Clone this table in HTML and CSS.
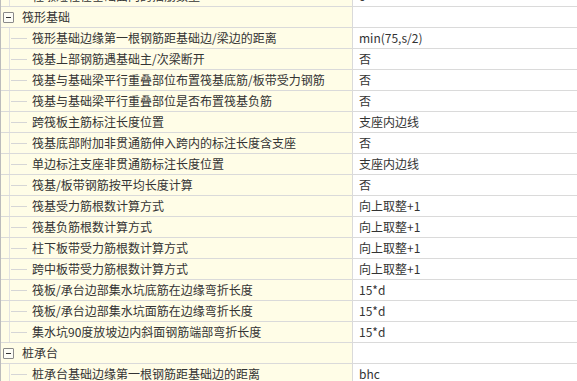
FILE: index.html
```html
<!DOCTYPE html>
<html lang="zh-CN">
<head>
<meta charset="utf-8">
<title>属性设置</title>
<link rel="stylesheet" href="styles.css">
</head>
<body>
<div class="grid">
  <div class="row item"><div class="name"><span class="indent"></span><span class="conn"></span><span class="label">柱墩短柱在基础面内的插筋数量</span></div><div class="value">0</div></div>
  <div class="row cat"><div class="name"><span class="toggle"></span><span class="label">筏形基础</span></div><div class="value"></div></div>
  <div class="row item"><div class="name"><span class="indent"></span><span class="conn"></span><span class="label">筏形基础边缘第一根钢筋距基础边/梁边的距离</span></div><div class="value">min(75,s/2)</div></div>
  <div class="row item"><div class="name"><span class="indent"></span><span class="conn"></span><span class="label">筏基上部钢筋遇基础主/次梁断开</span></div><div class="value">否</div></div>
  <div class="row item"><div class="name"><span class="indent"></span><span class="conn"></span><span class="label">筏基与基础梁平行重叠部位布置筏基底筋/板带受力钢筋</span></div><div class="value">否</div></div>
  <div class="row item"><div class="name"><span class="indent"></span><span class="conn"></span><span class="label">筏基与基础梁平行重叠部位是否布置筏基负筋</span></div><div class="value">否</div></div>
  <div class="row item"><div class="name"><span class="indent"></span><span class="conn"></span><span class="label">跨筏板主筋标注长度位置</span></div><div class="value">支座内边线</div></div>
  <div class="row item"><div class="name"><span class="indent"></span><span class="conn"></span><span class="label">筏基底部附加非贯通筋伸入跨内的标注长度含支座</span></div><div class="value">否</div></div>
  <div class="row item"><div class="name"><span class="indent"></span><span class="conn"></span><span class="label">单边标注支座非贯通筋标注长度位置</span></div><div class="value">支座内边线</div></div>
  <div class="row item"><div class="name"><span class="indent"></span><span class="conn"></span><span class="label">筏基/板带钢筋按平均长度计算</span></div><div class="value">否</div></div>
  <div class="row item"><div class="name"><span class="indent"></span><span class="conn"></span><span class="label">筏基受力筋根数计算方式</span></div><div class="value">向上取整+1</div></div>
  <div class="row item"><div class="name"><span class="indent"></span><span class="conn"></span><span class="label">筏基负筋根数计算方式</span></div><div class="value">向上取整+1</div></div>
  <div class="row item"><div class="name"><span class="indent"></span><span class="conn"></span><span class="label">柱下板带受力筋根数计算方式</span></div><div class="value">向上取整+1</div></div>
  <div class="row item"><div class="name"><span class="indent"></span><span class="conn"></span><span class="label">跨中板带受力筋根数计算方式</span></div><div class="value">向上取整+1</div></div>
  <div class="row item"><div class="name"><span class="indent"></span><span class="conn"></span><span class="label">筏板/承台边部集水坑底筋在边缘弯折长度</span></div><div class="value">15*d</div></div>
  <div class="row item"><div class="name"><span class="indent"></span><span class="conn"></span><span class="label">筏板/承台边部集水坑面筋在边缘弯折长度</span></div><div class="value">15*d</div></div>
  <div class="row item"><div class="name"><span class="indent"></span><span class="conn"></span><span class="label">集水坑90度放坡边内斜面钢筋端部弯折长度</span></div><div class="value">15*d</div></div>
  <div class="row cat"><div class="name"><span class="toggle"></span><span class="label">桩承台</span></div><div class="value"></div></div>
  <div class="row item"><div class="name"><span class="indent"></span><span class="conn"></span><span class="label">桩承台基础边缘第一根钢筋距基础边的距离</span></div><div class="value">bhc</div></div>
</div>
</body>
</html>
```

FILE: styles.css
```css
html, body {
  margin: 0;
  padding: 0;
  background: #ffffff;
  overflow: hidden;
}

body {
  font-family: "Noto Sans CJK SC", "Noto Sans", sans-serif;
  font-size: 12px;
  color: #333333;
}

.grid {
  margin-top: -14px;
  border-left: 1px solid #bcbcbc;
}

.row {
  display: flex;
  height: 21px;
  box-sizing: border-box;
  border-bottom: 1px solid #dadada;
}

.name {
  width: 352px;
  flex: none;
  box-sizing: border-box;
  border-right: 1px solid #dadada;
  background: #fffde7;
  display: flex;
  align-items: center;
  white-space: nowrap;
  overflow: hidden;
}

.value {
  flex: 1;
  background: #ffffff;
  padding-left: 6px;
  line-height: 20px;
  white-space: nowrap;
}

.label {
  line-height: 20px;
}

.indent {
  width: 9px;
  height: 20px;
  flex: none;
  box-sizing: border-box;
  border-right: 1px solid #e2e2e2;
}

.conn {
  width: 16px;
  height: 1px;
  flex: none;
  margin-left: 1px;
  margin-right: 5px;
  background: #d6d6d6;
}

.toggle {
  position: relative;
  width: 11px;
  height: 11px;
  flex: none;
  box-sizing: border-box;
  margin-left: 2px;
  margin-right: 8px;
  border: 1px solid #8a8a8a;
  border-radius: 1px;
  background: #fdfdf6;
}

.toggle::after {
  content: "";
  position: absolute;
  left: 2px;
  top: 4px;
  width: 5px;
  height: 1px;
  background: #333333;
}
```
